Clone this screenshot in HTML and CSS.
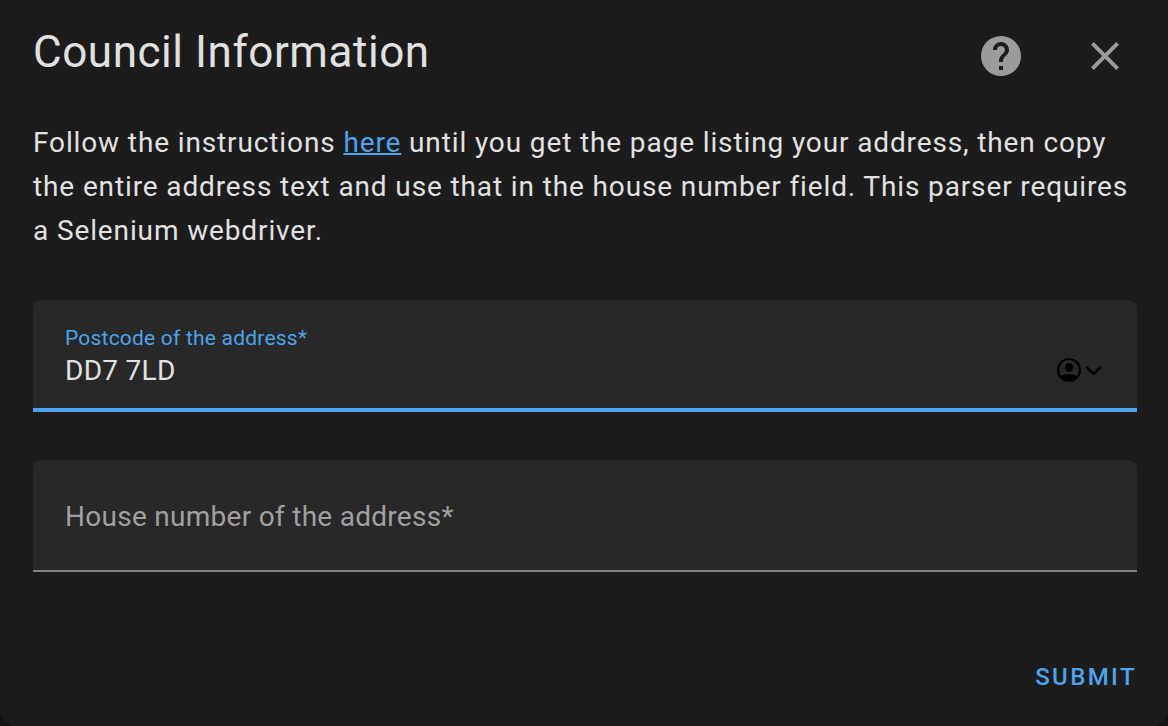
FILE: index.html
```html
<!DOCTYPE html>
<html lang="en">
<head>
<meta charset="utf-8">
<meta name="viewport" content="width=device-width, initial-scale=1">
<title>Council Information</title>
<link rel="stylesheet" href="styles.css">
</head>
<body>
<main class="dialog" role="dialog" aria-labelledby="title">
  <header class="dialog-header">
    <h1 class="title" id="title">Council Information</h1>
    <div class="actions">
      <button class="icon-button" type="button" aria-label="Help">
        <svg class="icon" viewBox="0 0 24 24"><path d="M15.07 11.25L14.17 12.17C13.45 12.89 13 13.5 13 15H11V14.5C11 13.39 11.45 12.39 12.17 11.67L13.41 10.41C13.78 10.05 14 9.55 14 9C14 7.89 13.1 7 12 7A2 2 0 0 0 10 9H8A4 4 0 0 1 12 5A4 4 0 0 1 16 9C16 9.88 15.64 10.67 15.07 11.25M13 19H11V17H13M12 2A10 10 0 0 0 2 12A10 10 0 0 0 12 22A10 10 0 0 0 22 12C22 6.47 17.5 2 12 2Z"/></svg>
      </button>
      <button class="icon-button" type="button" aria-label="Close">
        <svg class="icon" viewBox="0 0 24 24"><path d="M19 6.41L17.59 5 12 10.59 6.41 5 5 6.41 10.59 12 5 17.59 6.41 19 12 13.41 17.59 19 19 17.59 13.41 12 19 6.41z"/></svg>
      </button>
    </div>
  </header>
  <form class="form">
    <p class="intro">Follow the instructions <a class="link" href="#">here</a> until you get the page listing your address, then copy the entire address text and use that in the house number field. This parser requires a Selenium webdriver.</p>
    <div class="field field-active">
      <div class="field-body">
        <label class="field-label" for="postcode">Postcode of the address*</label>
        <input class="field-input" id="postcode" type="text" value="DD7 7LD">
      </div>
      <button class="autofill" type="button" aria-label="Autofill contact">
        <svg class="autofill-icon" viewBox="0 0 46 26"><circle cx="13" cy="13" r="11" fill="none" stroke="#000" stroke-width="2"/><ellipse cx="13" cy="10.500" rx="4" ry="4.500"/><path d="M4 20C7 16 19 16 22 20A12 12 0 0 1 4 20z"/><path d="M31 10.500l6.500 6.500L44 10.500" fill="none" stroke="#000" stroke-width="2.500" stroke-linecap="round" stroke-linejoin="round"/></svg>
      </button>
    </div>
    <div class="field">
      <input class="field-input field-empty" id="house" type="text" placeholder="House number of the address*" aria-label="House number of the address">
    </div>
    <footer class="footer"><button class="submit" type="submit">SUBMIT</button></footer>
  </form>
</main>
</body>
</html>
```
FILE: styles.css
```css
* { box-sizing: border-box; }
body {
  margin: 0;
  background: #141414;
  color: #e1e1e1;
  font-family: Roboto, sans-serif;
}
button, input { font: inherit; border: 0; background: none; padding: 0; }
button { cursor: pointer; }
.dialog {
  min-height: 100vh;
  padding: 16px 31px 0 33px;
  background: #1c1c1c;
  border-radius: 0 0 16px 16px;
}
.dialog-header { display: flex; justify-content: space-between; height: 80px; }
.title { margin: 8px 0 0; font-size: 44px; line-height: 56px; font-weight: 400; letter-spacing: 0.0125em; }
.actions { display: flex; gap: 56px; padding-right: 8px; }
.icon-button { width: 48px; height: 80px; color: #9b9b9b; }
.icon { display: block; width: 48px; height: 48px; fill: currentColor; }
.intro { margin: 25px 0 47px; font-size: 28px; line-height: 44px; letter-spacing: 0.03125em; }
.link { color: #4ba4ec; text-decoration-thickness: 2px; }
.field {
  display: flex;
  align-items: center;
  height: 112px;
  margin-bottom: 48px;
  padding: 0 32px;
  background: #282828;
  border-bottom: 2px solid #828282;
  border-radius: 8px 8px 0 0;
}
.field-active { border-bottom: 4px solid #4ba4ec; }
.field-body { flex: 1; display: flex; flex-direction: column; padding-top: 4px; }
.field-label { color: #4ba4ec; font-size: 21px; line-height: 28px; letter-spacing: 0.01em; }
.field-input { width: 100%; height: 36px; color: #e1e1e1; font-size: 28px; letter-spacing: 0.01em; outline: 0; }
.field-empty { height: 40px; padding-top: 2px; }
.field-empty::placeholder { color: #a0a0a0; opacity: 1; }
.autofill { width: 49px; padding: 32px 3px 0 0; }
.autofill-icon { display: block; width: 46px; height: 26px; }
.footer { display: flex; justify-content: flex-end; padding-top: 39px; }
.submit { color: #4ba4ec; font-size: 24px; line-height: 36px; font-weight: 500; letter-spacing: 0.1em; }
```
